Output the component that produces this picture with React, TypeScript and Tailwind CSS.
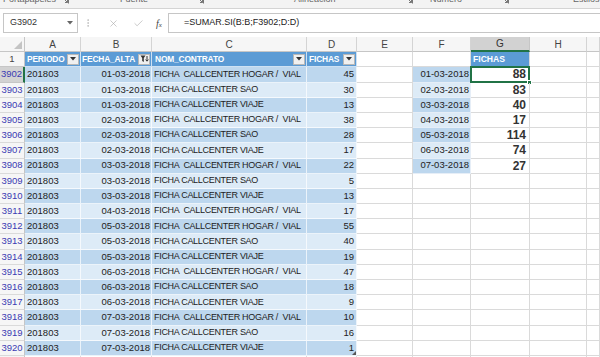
import { X, Check, EllipsisVertical } from 'lucide-react'

const rows: [number, string, string, number][] = [
  [3902, '01-03-2018', 'FICHA  CALLCENTER HOGAR /  VIAL', 45],
  [3903, '01-03-2018', 'FICHA CALLCENTER SAO', 30],
  [3904, '01-03-2018', 'FICHA CALLCENTER VIAJE', 13],
  [3905, '02-03-2018', 'FICHA  CALLCENTER HOGAR /  VIAL', 38],
  [3906, '02-03-2018', 'FICHA CALLCENTER SAO', 28],
  [3907, '02-03-2018', 'FICHA CALLCENTER VIAJE', 17],
  [3908, '03-03-2018', 'FICHA  CALLCENTER HOGAR /  VIAL', 22],
  [3909, '03-03-2018', 'FICHA CALLCENTER SAO', 5],
  [3910, '03-03-2018', 'FICHA CALLCENTER VIAJE', 13],
  [3911, '04-03-2018', 'FICHA  CALLCENTER HOGAR /  VIAL', 17],
  [3912, '05-03-2018', 'FICHA  CALLCENTER HOGAR /  VIAL', 55],
  [3913, '05-03-2018', 'FICHA CALLCENTER SAO', 40],
  [3914, '05-03-2018', 'FICHA CALLCENTER VIAJE', 19],
  [3915, '06-03-2018', 'FICHA  CALLCENTER HOGAR /  VIAL', 47],
  [3916, '06-03-2018', 'FICHA CALLCENTER SAO', 18],
  [3917, '06-03-2018', 'FICHA CALLCENTER VIAJE', 9],
  [3918, '07-03-2018', 'FICHA  CALLCENTER HOGAR /  VIAL', 10],
  [3919, '07-03-2018', 'FICHA CALLCENTER SAO', 16],
  [3920, '07-03-2018', 'FICHA CALLCENTER VIAJE', 1],
]

// summary block in F:G
const summary: [string, number][] = [
  ['01-03-2018', 88],
  ['02-03-2018', 83],
  ['03-03-2018', 40],
  ['04-03-2018', 17],
  ['05-03-2018', 114],
  ['06-03-2018', 74],
  ['07-03-2018', 27],
]

const letters = ['A', 'B', 'C', 'D', 'E', 'F', 'G', 'H', '']

function Launcher({ className = '' }: { className?: string }) {
  return (
    <svg width="7" height="7" viewBox="0 0 7 7" className={`mb-[1px] shrink-0 ${className}`}>
      <path d="M0.5 0.5H6.5V6.5" fill="none" stroke="#777" strokeWidth="1" />
      <path d="M2 2L5.5 5.5M5.5 3V5.5H3" fill="none" stroke="#777" strokeWidth="1" />
    </svg>
  )
}

function DropBtn({ filter }: { filter?: boolean }) {
  return (
    <div className="w-[12px] h-[11px] bg-[#f0f0f0] border border-[#b8b8b8] flex items-center justify-center shrink-0 mr-[1px]">
      {filter ? (
        <svg width="9" height="8" viewBox="0 0 9 8">
          <path d="M0.5 0.5H5.5L3.8 3V7L2.2 6V3Z" fill="#333" />
          <path d="M7 1V6M5.6 4.6L7 6.2L8.4 4.6" fill="none" stroke="#333" strokeWidth="1" />
        </svg>
      ) : (
        <svg width="6" height="4" viewBox="0 0 6 4">
          <path d="M0 0H6L3 3.5Z" fill="#333" />
        </svg>
      )}
    </div>
  )
}

const gridCols = 'grid grid-cols-[25px_56px_71px_155px_50px_56px_58px_59px_57px_13px] auto-rows-[15.2px]'
const cell = 'border-r border-b border-[#dadada] flex items-center'
const tcell = 'border-r border-b border-white/70 flex items-center'
const hcell = 'border-r border-b border-white/70 flex items-center justify-between bg-[#5b9bd5] text-white font-bold text-[8.4px] tracking-[-0.15px] whitespace-nowrap overflow-hidden'

export default function App() {
  return (
    <div className="w-[600px] h-[357px] overflow-hidden bg-white font-['Liberation_Sans',Arial,sans-serif] text-[#222]">
      {/* ribbon group labels (cut off by the scroll) */}
      <div className="h-[9px] bg-[#f3f3f3] border-b border-[#d4d4d4] overflow-hidden flex items-end pb-[3px] pl-[3px] text-[9px] leading-[11px] text-[#666] whitespace-nowrap">
        <span className="w-[53px] shrink-0">Portapapeles</span>
        <Launcher className="ml-[6px]" />
        <span className="ml-[51px] w-[28px] shrink-0">Fuente</span>
        <Launcher className="ml-[49px]" />
        <span className="ml-[90px] w-[42px] shrink-0">Alineación</span>
        <Launcher className="ml-[70px]" />
        <span className="ml-[17px] w-[34px] shrink-0">Número</span>
        <Launcher className="ml-[38px]" />
        <span className="ml-[64px]">Estilos</span>
      </div>

      {/* formula bar */}
      <div className="h-[28px] flex items-center bg-white">
        <div className="ml-[3px] w-[75px] h-[20px] border border-[#c6c6c6] flex items-center justify-between pl-[6px] pr-[4px] text-[9px] text-[#333]">
          <span>G3902</span>
          <svg width="6" height="4" viewBox="0 0 6 4"><path d="M0 0H6L3 3.5Z" fill="#666" /></svg>
        </div>
        <EllipsisVertical size={10} color="#bcbcbc" strokeWidth={2} className="ml-[5px]" />
        <X size={11} color="#a8a8a8" strokeWidth={1.3} className="ml-[15px]" />
        <Check size={11} color="#a8a8a8" strokeWidth={1.3} className="ml-[14px]" />
        <span className="ml-[12px] font-['Liberation_Serif',serif] italic text-[10px] text-[#444]">
          f<span className="text-[7px]">x</span>
        </span>
        <div className="ml-[6px] flex-1 h-[20px] border-l border-y border-[#c6c6c6] flex items-center pl-[15px] text-[9px] text-[#222]">
          =SUMAR.SI(B:B;F3902;D:D)
        </div>
      </div>

      {/* sheet */}
      <div className={gridCols}>
        {/* column letters */}
        <div className="border-r border-b border-[#c6c6c6] bg-[#f6f6f6] flex items-end justify-end p-[2px]">
          <svg width="8" height="8" viewBox="0 0 8 8"><path d="M8 0V8H0Z" fill="#c4c4c4" /></svg>
        </div>
        {letters.map((l, i) => (
          <div
            key={i}
            className={
              l === 'G'
                ? 'border-r border-b-2 border-r-[#c6c6c6] border-b-[#217346] bg-[#d2d2d2] flex items-center justify-center text-[10px] text-[#333]'
                : 'border-r border-b border-[#d4d4d4] border-b-[#c6c6c6] bg-[#f6f6f6] flex items-center justify-center text-[10px] text-[#444]'
            }
          >
            {l}
          </div>
        ))}

        {/* row 1: table header */}
        <div className="border-r border-b border-[#c6c6c6] bg-[#f6f6f6] flex items-center justify-center text-[9.5px] text-[#444]">1</div>
        <div className={`${hcell} pl-[2px]`}>
          <span>PERIODO</span><DropBtn />
        </div>
        <div className={`${hcell} pl-[1px]`}>
          <span>FECHA_ALTA</span><DropBtn filter />
        </div>
        <div className={`${hcell} pl-[3px]`}>
          <span>NOM_CONTRATO</span><DropBtn />
        </div>
        <div className={`${hcell} pl-[2px]`}>
          <span>FICHAS</span><DropBtn />
        </div>
        <div className={cell} />
        <div className={cell} />
        <div className={`${cell} bg-[#5b9bd5] border-[#5b9bd5] pl-[2px] text-white font-bold text-[8.6px]`}>FICHAS</div>
        <div className={cell} />
        <div className={cell} />

        {/* data rows */}
        {rows.map(([n, date, name, qty], i) => {
          const band = i % 2 === 0 ? 'bg-[#bdd7ee]' : 'bg-[#ddebf7]'
          const s = summary[i]
          return (
            <div key={n} className="contents">
              <div
                className={
                  i === 0
                    ? 'border-b border-r-2 border-b-[#c6c6c6] border-r-[#217346] bg-[#d2d2d2] flex items-center justify-center text-[9.5px] text-[#3b3bb3]'
                    : 'border-r border-b border-[#c6c6c6] border-b-[#dadada] bg-[#f6f6f6] flex items-center justify-center text-[9.5px] text-[#3b3bb3]'
                }
              >
                {n}
              </div>
              <div className={`${tcell} ${band} pl-[2px] text-[9.5px]`}>201803</div>
              <div className={`${tcell} ${band} justify-end pr-[1px] text-[9.5px]`}>{date}</div>
              <div className={`${tcell} ${band} pl-[2px] text-[9px] tracking-[-0.3px] whitespace-pre overflow-hidden`}>{name}</div>
              <div className={`${tcell} ${band} justify-end pr-[2px] text-[9.5px] relative`}>
                {qty}
                {i === rows.length - 1 && (
                  <svg width="4" height="4" viewBox="0 0 4 4" className="absolute right-[0px] bottom-[0px]">
                    <path d="M4 0V4H0Z" fill="#555" />
                  </svg>
                )}
              </div>
              <div className={cell} />
              {s ? (
                <div className={`${cell} ${band} border-[#e6eef7] justify-end pr-[1px] text-[9.5px]`}>{s[0]}</div>
              ) : (
                <div className={cell} />
              )}
              {s ? (
                <div className={`${cell} justify-end pr-[3px] text-[12px] font-bold text-[#333] relative`}>
                  {s[1]}
                  {i === 0 && (
                    <>
                      <div className="absolute -left-px -top-px right-[-1px] bottom-[-1px] border-2 border-[#217346]" />
                      <div className="absolute right-[-3px] bottom-[-3px] w-[5px] h-[5px] bg-[#217346] border border-white" />
                    </>
                  )}
                </div>
              ) : (
                <div className={cell} />
              )}
              <div className={cell} />
              <div className={cell} />
            </div>
          )
        })}

        {/* partially visible next row */}
        <div className="border-r border-[#c6c6c6] bg-[#f6f6f6]" />
        {letters.map((_, i) => (
          <div key={i} className="border-r border-[#dadada]" />
        ))}
      </div>
    </div>
  )
}
